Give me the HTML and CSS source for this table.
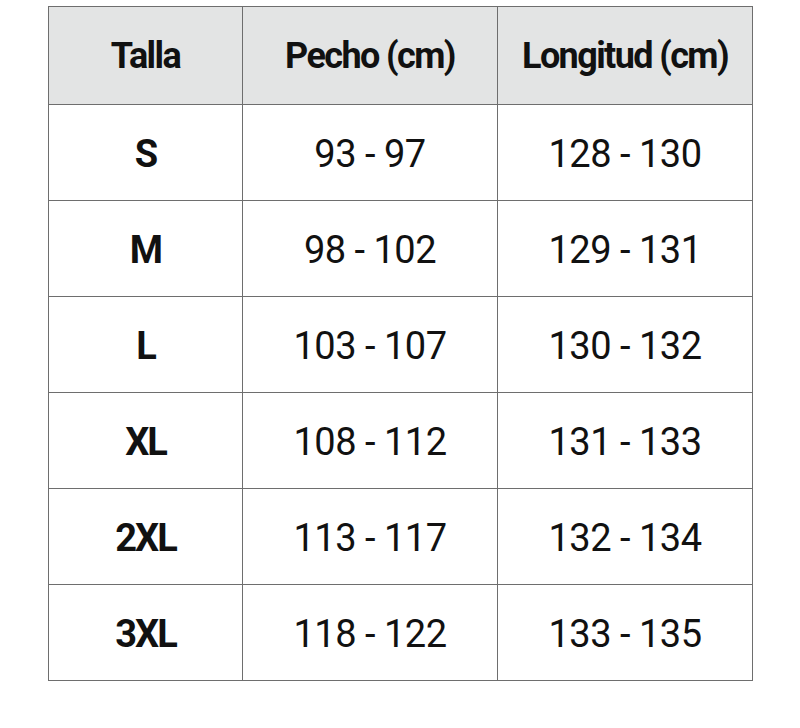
FILE: index.html
```html
<!DOCTYPE html>
<html>
<head>
<meta charset="utf-8">
<link rel="stylesheet" href="styles.css">
</head>
<body>
<table class="sizes">
  <thead>
    <tr><th class="c1">Talla</th><th class="c2">Pecho (cm)</th><th class="c3">Longitud (cm)</th></tr>
  </thead>
  <tbody>
    <tr><td class="size">S</td><td>93 - 97</td><td>128 - 130</td></tr>
    <tr><td class="size">M</td><td>98 - 102</td><td>129 - 131</td></tr>
    <tr><td class="size">L</td><td>103 - 107</td><td>130 - 132</td></tr>
    <tr><td class="size">XL</td><td>108 - 112</td><td>131 - 133</td></tr>
    <tr><td class="size">2XL</td><td>113 - 117</td><td>132 - 134</td></tr>
    <tr><td class="size">3XL</td><td>118 - 122</td><td>133 - 135</td></tr>
  </tbody>
</table>
</body>
</html>
```
FILE: styles.css
```css
html, body { margin: 0; padding: 0; background: #ffffff; }
body { padding: 6px 0 0 48px; font-family: Roboto, "Noto Sans", sans-serif; color: #111; }
.sizes { border-collapse: collapse; table-layout: fixed; width: 703px; }
.sizes th, .sizes td { border: 1.5px solid #6e6e6e; text-align: center; padding: 0; }
.sizes th { background: #e3e4e4; height: 97px; font-weight: 700; font-size: 36px; letter-spacing: -1.6px; }
.sizes td { height: 92px; font-size: 38px; font-weight: 400; letter-spacing: -0.5px; padding-top: 3px; }
.sizes td.size { font-weight: 700; letter-spacing: -2px; }
.c1 { width: 193px; }
.c2 { width: 254px; }
.c3 { width: 254px; }
```
